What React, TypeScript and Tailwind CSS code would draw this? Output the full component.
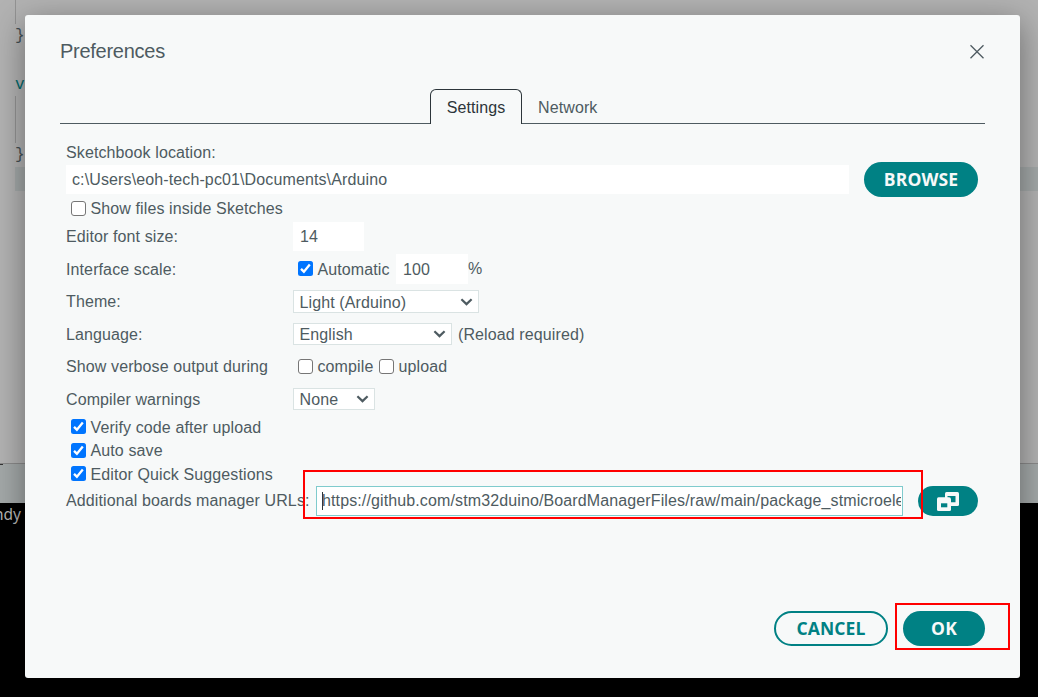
import type { ReactNode } from "react";

function Check({ on = false }: { on?: boolean }) {
  return on ? (
    <span className="flex h-[15px] w-[15px] shrink-0 items-center justify-center rounded-[2.5px] bg-[#0075ff]">
      <svg width="15" height="15" viewBox="0 0 15 15" fill="none" stroke="#fff" strokeWidth="2.3">
        <path d="M3 7.9 5.9 10.7 11.8 3.6" />
      </svg>
    </span>
  ) : (
    <span className="block h-[15px] w-[15px] shrink-0 rounded-[3px] border border-[#767676] bg-white" />
  );
}

function Select({ children, className }: { children: ReactNode; className: string }) {
  return (
    <div className={"flex items-center justify-between border border-[#dae3e3] bg-white pl-[5.5px] pr-[5px] " + className}>
      <span className="pt-[2px]">{children}</span>
      <svg width="13" height="8" viewBox="0 0 13 8" fill="none" stroke="#4e5b61" strokeWidth="2.2">
        <path d="M1.4 1.2 6.5 6.1 11.6 1.2" />
      </svg>
    </div>
  );
}

function Row({ label, className, children }: { label: string; className: string; children?: ReactNode }) {
  return (
    <div className={"flex items-center " + className}>
      <span className="w-[227px] shrink-0">{label}</span>
      {children}
    </div>
  );
}

function CheckRow({ label, on, className }: { label: string; on?: boolean; className: string }) {
  return (
    <div className={"flex items-center pl-[5px] " + className}>
      <Check on={on} />
      <span className="ml-[4.5px] pt-px">{label}</span>
    </div>
  );
}

function Backdrop() {
  return (
    <div className="flex h-full flex-col font-['Liberation_Mono',monospace] text-[16px] leading-6">
      <div className="h-[463px] bg-[#b2b2b2] pl-[15px]">
        <div className="h-6 border-l border-[#939393]" />
        <div className="h-6 text-[#434f54]">{"}"}</div>
        <div className="h-6" />
        <div className="h-6 pt-px text-[#00696c]">void</div>
        <div className="h-[47px] border-l border-[#939393]" />
        <div className="h-6 text-[#434f54]">{"}"}</div>
        <div className="h-6 bg-[#a3a8a8]" />
      </div>
      <div className="h-[40px] border-t border-[#8a8a8a] bg-[#a3a8a8]">
        <div className="h-px w-[3px] bg-[#333]" />
      </div>
      <div className="flex-1 bg-black font-['Noto_Sans',sans-serif] text-[15.5px] text-[#b4b4b4]">
        <div className="-ml-[6px] -mt-px">ndy</div>
      </div>
    </div>
  );
}

export default function App() {
  return (
    <div className="relative h-[697px] w-[1038px] overflow-hidden font-['Liberation_Sans',Arial,sans-serif] text-[16px] leading-5 text-[#4e5b61]">
      <Backdrop />
      <div className="absolute left-[25px] top-[15px] flex h-[663px] w-[995px] flex-col rounded-[3px] bg-[#f7f9f9] px-[35px] tracking-[0.11px] shadow-[0_8px_32px_rgba(0,0,0,0.4)]">
        <header className="flex h-[73px] items-center justify-between">
          <h1 className="pb-[2px] text-[20px] tracking-[-0.27px]">Preferences</h1>
          <svg width="16" height="16" viewBox="0 0 16 16" fill="none" stroke="#4e5b61" strokeWidth="1.3">
            <path d="M1.5 1.2 14.5 14.2M14.5 1.2 1.5 14.2" />
          </svg>
        </header>
        <nav className="mt-px flex h-[35px]">
          <div className="w-[370px] border-b border-[#4e5b61]" />
          <div className="flex w-[92px] items-center justify-center rounded-t-[6px] border border-b-0 border-[#2c353a] pt-px text-[#2c353a]">
            Settings
          </div>
          <div className="flex flex-1 items-center border-b border-[#4e5b61] pl-[16px] pt-[3px]">Network</div>
        </nav>
        <main className="flex h-[487px] flex-col pl-[6px] pr-[7px] pt-[18px]">
          <div className="h-5 pt-px">Sketchbook location:</div>
          <div className="flex h-[35px] items-center justify-between">
            <div className="flex h-[29px] w-[783px] items-center bg-white pl-[6px] tracking-[0.12px]">
              c:\Users\eoh-tech-pc01\Documents\Arduino
            </div>
            <button className="h-[35px] w-[114px] rounded-full bg-[#008184] pb-[2px] font-['Open_Sans',sans-serif] text-[17.5px] font-bold text-[#f7f9f9]">
              BROWSE
            </button>
          </div>
          <CheckRow label="Show files inside Sketches" className="h-[23px]" />
          <Row label="Editor font size:" className="mt-[2px] h-[29px]">
            <div className="flex h-[29px] w-[71px] items-center bg-white pl-[7px]">14</div>
          </Row>
          <div className="mt-[3px] flex h-[30px] items-center">
            <span className="w-[227px] shrink-0 pt-[2px]">Interface scale:</span>
            <div className="flex items-center pl-[5px]">
              <div className="-mt-px">
                <Check on />
              </div>
              <span className="ml-[4.5px] w-[78.5px] pt-[2px]">Automatic</span>
              <div className="flex h-[30px] w-[72px] items-center bg-white pl-[7px] pt-[2px]">100</div>
              <span>%</span>
            </div>
          </div>
          <Row label="Theme:" className="mt-[6px] h-[23px]">
            <Select className="h-[23px] w-[186px]">Light (Arduino)</Select>
          </Row>
          <div className="mt-[10px] flex h-[22px] items-center">
            <span className="w-[227px] shrink-0 pt-[2px]">Language:</span>
            <Select className="h-[22px] w-[159px]">English</Select>
            <span className="ml-[6px] pt-[2px]">(Reload required)</span>
          </div>
          <Row label="Show verbose output during" className="mt-[11px] h-[22px]">
            <div className="flex items-center pl-[5px]">
              <div className="-mt-px">
                <Check />
              </div>
              <span className="ml-[4.5px] w-[61.5px]">compile</span>
              <div className="-mt-px">
                <Check />
              </div>
              <span className="ml-[4.5px]">upload</span>
            </div>
          </Row>
          <div className="mt-[10px] flex h-[22px] items-center">
            <span className="w-[227px] shrink-0 pt-[2px]">Compiler warnings</span>
            <Select className="h-[22px] w-[82px]">None</Select>
          </div>
          <div className="mt-[5px] flex h-[23px] items-center pl-[5px]">
            <Check on />
            <span className="ml-[4.5px] pt-[2px]">Verify code after upload</span>
          </div>
          <CheckRow on label="Auto save" className="h-[24px]" />
          <div className="flex h-[24px] items-center pb-px pl-[5px]">
            <Check on />
            <span className="ml-[4.5px] pt-[2px]">Editor Quick Suggestions</span>
          </div>
          <div className="flex h-[30px] items-center">
            <span className="w-[250px] shrink-0">Additional boards manager URLs:</span>
            <div className="flex h-[30px] w-[587px] items-center border border-[#7fcbcd] bg-white pl-[5px] pr-px">
              <span className="h-[18px] w-px shrink-0 bg-[#2c353a]" />
              <span className="-ml-px overflow-hidden whitespace-nowrap tracking-[0.12px]">
                https://github.com/stm32duino/BoardManagerFiles/raw/main/package_stmicroelectronics_index.json
              </span>
            </div>
            <button className="ml-[15px] flex h-[30px] w-[60px] items-center justify-center rounded-full bg-[#008184]">
              <svg width="22" height="19" viewBox="0 0 22 19">
                <rect x="8" y="0" width="14" height="14" rx="1.5" fill="#f7f9f9" />
                <rect x="0" y="5.3" width="14" height="13.7" rx="1.5" fill="#f7f9f9" />
                <path d="M10.5 4h8v6.300H14V7.500Q14 5.300 12 5.300H10.500z" fill="#008184" />
                <rect x="4" y="11.300" width="6.300" height="4" fill="#008184" />
              </svg>
            </button>
          </div>
        </main>
        <footer className="flex h-[35px] justify-end gap-[15px] font-['Open_Sans',sans-serif] text-[17.5px] font-bold">
          <button className="w-[114px] rounded-full border-2 border-[#008184] pb-[2px] text-[#008184]">CANCEL</button>
          <button className="w-[82px] rounded-full bg-[#008184] pb-[2px] text-[#f7f9f9]">OK</button>
        </footer>
      </div>
      <div className="absolute left-[303px] top-[470px] h-[49px] w-[620px] border-2 border-[#f00]" />
      <div className="absolute left-[895px] top-[603px] h-[47px] w-[115px] border-2 border-[#f00]" />
    </div>
  );
}
